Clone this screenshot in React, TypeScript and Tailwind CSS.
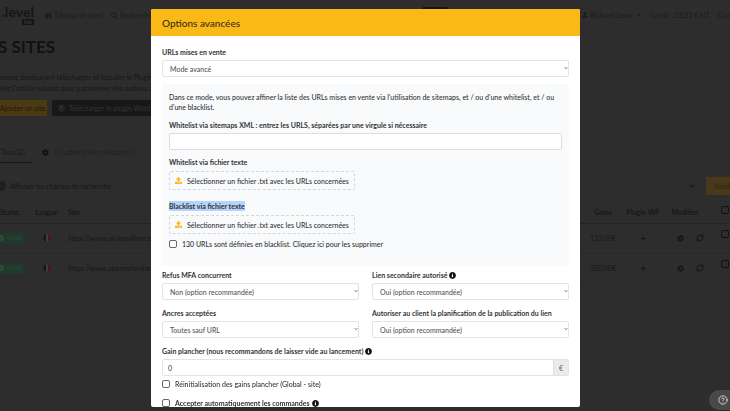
import type { ReactNode } from "react";
import {
  FaChevronDown,
  FaCog,
  FaInfoCircle,
  FaPlus,
  FaSearch,
  FaTachometerAlt,
  FaUpload,
  FaUser,
  FaWordpress,
  FaCheckCircle,
  FaCaretDown,
} from "react-icons/fa";
import { CircleHelp, RefreshCw } from "lucide-react";

function Select({ id, label, options, info }: { id: string; label: string; options: string[]; info?: boolean }) {
  return (
    <div className="flex min-w-0 flex-1 flex-col gap-[3px]">
      <label htmlFor={id} className="flex items-center gap-0.5 font-bold whitespace-nowrap">
        {label}
        {info && <FaInfoCircle className="size-[7px] text-[#111]" />}
      </label>
      <div className="relative">
        <select
          id={id}
          className="block h-[17px] w-full appearance-none rounded-xs border border-[#e1e4e8] bg-white px-[7px] text-[#555]"
        >
          {options.map((o) => (
            <option key={o}>{o}</option>
          ))}
        </select>
        <FaChevronDown className="pointer-events-none absolute top-1.5 right-px size-1 text-[#777]" />
      </div>
    </div>
  );
}

function FilePicker({ id, label, selected }: { id: string; label: string; selected?: boolean }) {
  return (
    <div className="flex flex-col items-start gap-1">
      <label htmlFor={id} className={selected ? "bg-[#b3d4fb] font-bold" : "font-bold"}>
        {label}
      </label>
      <button
        id={id}
        type="button"
        className="flex h-[19px] items-center gap-[5px] rounded-xs border border-dashed border-[#d3d6da] px-[5px] text-[7px] whitespace-nowrap"
      >
        <FaUpload className="size-[7px] text-[#fbb917]" />
        Sélectionner un fichier .txt avec les URLs concernées
      </button>
    </div>
  );
}

function Check({ children, bold }: { children: ReactNode; bold?: boolean }) {
  return (
    <label className={bold ? "flex items-center gap-[5px] font-bold" : "flex items-center gap-[5px]"}>
      <input type="checkbox" className="size-2 shrink-0 appearance-none rounded-xs border border-[#666] bg-white" />
      {children}
    </label>
  );
}

function SiteRow({ url, gain }: { url: string; gain: string }) {
  return (
    <tr className="h-[30px] border-b border-[#292929] text-center">
      <td>
        <span className="flex h-[11px] w-6 items-center gap-0.5 bg-[#1f3a2c] pl-0.5 text-[6px] text-[#294836]">
          <FaCheckCircle className="ml-[-4px] size-[6px] text-[#3a4a40]" />
          Validé
        </span>
      </td>
      <td>
        <svg viewBox="0 0 8 8" className="mx-auto size-2" aria-label="Français">
          <path d="M3 0.5a3.6 3.6 0 0 0 0 7z" fill="#10162e" />
          <rect x="3" y="0.5" width="2" height="7" fill="#3d3d3d" />
          <path d="M5 0.5a3.6 3.6 0 0 1 0 7z" fill="#49171c" />
        </svg>
      </td>
      <td className="text-left">
        <a href="#site">{url}</a>
      </td>
      <td>{gain}</td>
      <td>
        <FaPlus className="mx-auto size-[5px]" />
      </td>
      <td>
        <span className="flex items-center justify-center gap-3 pl-[11px]">
          <button type="button" aria-label="Modifier">
            <FaCog className="block size-[7px]" />
          </button>
          <button type="button" aria-label="Actualiser">
            <RefreshCw className="block size-2" strokeWidth={3} />
          </button>
        </span>
      </td>
      <td className="pb-2">
        <input type="checkbox" aria-label={url} className="ml-4 block size-2 appearance-none rounded-xs border border-[#111]" />
      </td>
    </tr>
  );
}

function SitesPage() {
  return (
    <div className="min-h-dvh overflow-hidden bg-[#2d2d2d] pt-[5px] text-[7px] leading-[10px] whitespace-nowrap text-[#171717]">
      <header className="flex h-5 items-center">
        <div className="flex w-[45px] flex-col items-end pr-[11px]">
          <span className="text-[14px] leading-[14px] font-black">.level</span>
          <span className="rounded-[1px] bg-[#151515] px-0.5 text-[5px] leading-[6px] font-bold text-[#3a3a3a]">link</span>
        </div>
        <nav className="flex items-center gap-2 text-[#1c1c1c]">
          <a href="#bord" className="flex items-center gap-0.5">
            <FaTachometerAlt className="size-[7px]" />
            Tableau de bord
          </a>
          <a href="#recherche" className="flex items-center gap-0.5">
            <FaSearch className="size-[7px]" />
            Rechercher
          </a>
        </nav>
        <span className="flex-[2]" />
        <span className="h-4 w-[26px] rounded-xs bg-[#151515]" />
        <span className="flex-1" />
        <div className="-mr-5 flex items-center gap-2 text-[#1c1c1c]">
          <button type="button" className="flex items-center gap-0.5">
            <FaUser className="size-[6px]" />
            Richard Lewis
            <FaCaretDown className="ml-0.5 size-[6px]" />
          </button>
          <span>Crédit : 22,52 € HT</span>
          <span>Gains : 0 €</span>
        </div>
      </header>

      <h1 className="mt-[12px] -ml-0.5 text-[17px] leading-[20px] font-bold text-[#111]">S SITES</h1>
      <p className="mt-[15px]">ouvez dorénavant télécharger et installer le Plugin WordPress</p>
      <p className="mt-px">itez l'article suivant pour paramétrer des options avancées</p>

      <div className="mt-[7px] flex gap-[5px]">
        <button type="button" className="h-4 w-[47px] bg-[#4b3a12] pr-1 text-[#1d1908]">
          Ajouter un site
        </button>
        <button type="button" className="flex h-4 items-center gap-1 bg-[#181818] px-1.5 text-[#333]">
          <FaWordpress className="size-[7px]" />
          Télécharger le plugin WordPress
        </button>
      </div>

      <div className="mt-[31px] flex h-4 gap-2">
        <button type="button" className="flex w-8 border-b border-[#191919] pl-px">
          Tous (2)
        </button>
        <button type="button" className="flex h-[10px] items-center gap-1.5 text-[#202020]">
          <FaCog className="ml-0.5 size-[7px] text-[#111]" />
          En attente de validation (0)
        </button>
      </div>

      <div className="mt-[14px] flex h-[18px] items-center">
        <span className="mr-1 h-[10px] w-1.5 rounded-r-sm bg-[#1f1f1f]" />
        Afficher les champs de recherche
        <FaChevronDown className="mr-[11px] ml-auto size-[6px]" />
        <button type="button" className="h-[18px] w-6 overflow-hidden bg-[#49391a] text-left text-[#2a220f]">
          <span className="ml-2">Valider</span>
        </button>
      </div>

      <table className="mt-[6px] w-full table-fixed border-collapse">
        <colgroup>
          <col className="w-[25px]" />
          <col className="w-[43px]" />
          <col />
          <col className="w-[36px]" />
          <col className="w-[44px]" />
          <col className="w-[40px]" />
          <col className="w-[25px]" />
        </colgroup>
        <thead>
          <tr className="h-[22px] border-b border-[#232323]">
            <th className="text-left">Statut</th>
            <th>Langue</th>
            <th className="text-left">Site</th>
            <th>Gains</th>
            <th>Plugin WP</th>
            <th>Modifier</th>
            <th className="pb-1">
              <input type="checkbox" aria-label="Tout sélectionner" className="ml-4 block size-2 appearance-none rounded-xs border border-[#111]" />
            </th>
          </tr>
        </thead>
        <tbody>
          <SiteRow url="https://www.pickupalliance.com" gain="135,00€" />
          <SiteRow url="https://www.apprentivoliance.fr" gain="350,00€" />
        </tbody>
      </table>
    </div>
  );
}

export default function App() {
  return (
    <div className="h-dvh overflow-hidden font-['Lato',sans-serif]">
      <SitesPage />

      <div className="fixed inset-0 flex justify-center pt-[9px] pb-1 pl-px">
        <section
          role="dialog"
          aria-labelledby="dialog-title"
          className="flex w-full max-w-[429px] flex-col overflow-hidden rounded-xs bg-white text-[7px] leading-[10px] font-medium text-[#333]"
        >
          <header className="flex h-[27px] shrink-0 items-center bg-[#fbb917] px-[11px]">
            <h2 id="dialog-title" className="text-[10px] leading-4 font-medium text-[#3a2f14]">
              Options avancées
            </h2>
          </header>

          <form className="flex min-h-0 flex-1 flex-col overflow-hidden px-[11px] pt-[11px] *:shrink-0">
            <Select id="mode" label="URLs mises en vente" options={["Mode avancé", "Mode simple"]} />

            <div className="mt-[7px] flex flex-col bg-[#f8fafc] px-[7px] pt-2 pb-[17px]">
              <p>
                Dans ce mode, vous pouvez affiner la liste des URLs mises en vente via l'utilisation de sitemaps, et / ou
                d'une whitelist, et / ou d'une blacklist.
              </p>
              <label htmlFor="sitemaps" className="mt-2 font-bold">
                Whitelist via sitemaps XML : entrez les URLS, séparées par une virgule si nécessaire
              </label>
              <input
                id="sitemaps"
                type="text"
                className="mt-[3px] mb-[7px] h-[17px] rounded-xs border border-[#dadde1] bg-white px-[5px]"
              />
              <FilePicker id="whitelist" label="Whitelist via fichier texte" />
              <div className="mt-[11px] mb-[5px]">
                <FilePicker id="blacklist" label="Blacklist via fichier texte" selected />
              </div>
              <Check>130 URLs sont définies en blacklist. Cliquez ici pour les supprimer</Check>
            </div>

            <div className="mt-1 flex gap-[13px]">
              <Select id="mfa" label="Refus MFA concurrent" options={["Non (option recommandée)", "Oui"]} />
              <Select id="lien" label="Lien secondaire autorisé" options={["Oui (option recommandée)", "Non"]} info />
            </div>
            <div className="mt-2 flex gap-[13px]">
              <Select id="ancres" label="Ancres acceptées" options={["Toutes sauf URL", "Toutes"]} />
              <Select
                id="planification"
                label="Autoriser au client la planification de la publication du lien"
                options={["Oui (option recommandée)", "Non"]}
              />
            </div>

            <label htmlFor="gain" className="mt-2 flex items-center gap-0.5 font-bold">
              Gain plancher (nous recommandons de laisser vide au lancement)
              <FaInfoCircle className="size-[7px] text-[#111]" />
            </label>
            <div className="mt-[3px] mb-[3px] flex h-[17px] rounded-xs border border-[#e1e4e8]">
              <input id="gain" type="text" defaultValue="0" className="min-w-0 flex-1 px-[5px] text-[#555]" />
              <span className="flex w-[15px] items-center justify-center border-l border-[#dadde1] bg-[#e9ebee] text-[#666]">
                €
              </span>
            </div>
            <Check>Réinitialisation des gains plancher (Global - site)</Check>
            <div className="mt-[9px]">
              <Check bold>
                <span className="flex items-center gap-0.5">
                  Accepter automatiquement les commandes
                  <FaInfoCircle className="size-[7px] text-[#111]" />
                </span>
              </Check>
            </div>
          </form>
        </section>
      </div>

      <button
        type="button"
        aria-label="Aide"
        className="fixed right-0 bottom-px flex h-5 w-[21px] items-center rounded-l-full bg-[#494949] pl-[9px] text-[#e5e5e5]"
      >
        <CircleHelp className="size-[10px] shrink-0" strokeWidth={2} />
      </button>
    </div>
  );
}
